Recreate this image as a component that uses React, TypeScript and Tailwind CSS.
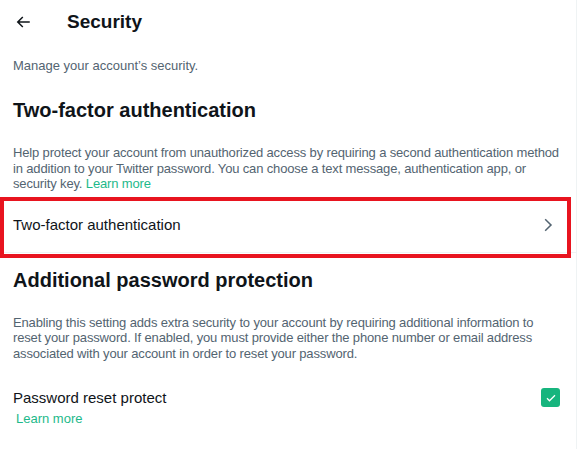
import React from "react";

export default function App() {
  const font = { fontFamily: '"Liberation Sans", Arial, sans-serif' };
  return (
    <div className="w-[581px] h-[449px] bg-white overflow-hidden" style={font}>
      <div className="relative w-[577px] h-[449px] border-r border-[#eff3f4]">
        {/* Header */}
        <div className="flex items-center h-[44px] pl-[14px]">
          <svg width="18" height="18" viewBox="0 0 24 24" className="text-[#0f1419]">
            <path d="M7.414 13l5.043 5.04-1.414 1.42L3.586 12l7.457-7.46 1.414 1.42L7.414 11H21v2H7.414z" fill="currentColor" />
          </svg>
          <div className="ml-[35px] text-[19px] font-bold text-[#0f1419] leading-[24px]">Security</div>
        </div>
        <div className="px-[13px] mt-[14px] text-[13px] leading-[16px] text-[#536471]">
          Manage your account’s security.
        </div>
        <div className="px-[13px] mt-[24px] text-[20px] font-bold leading-[24px] text-[#0f1419]">
          Two-factor authentication
        </div>
        <div className="pl-[13px] pr-[16px] mt-[23px] text-[13px] tracking-[-0.15px] leading-[15.6px] text-[#536471]">
          Help protect your account from unauthorized access by requiring a second authentication method in addition to your Twitter password. You can choose a text message, authentication app, or security key. <span className="text-[#1db98a]">Learn more</span>
        </div>
        <div className="mt-[6px] h-[55px] flex items-center justify-between px-[13px] border-b border-[#eff3f4]">
          <span className="text-[15px] text-[#0f1419]">Two-factor authentication</span>
          <svg width="18" height="18" viewBox="0 0 24 24" className="mr-[6px] text-[#536471]">
            <path d="M14.586 12L7.543 4.96l1.414-1.42L17.414 12l-8.457 8.46-1.414-1.42L14.586 12z" fill="currentColor" />
          </svg>
        </div>
        <div className="px-[13px] mt-[15px] text-[20px] font-bold leading-[24px] text-[#0f1419]">
          Additional password protection
        </div>
        <div className="pl-[13px] pr-[16px] mt-[23px] text-[13px] tracking-[-0.15px] leading-[15.6px] text-[#536471]">
          Enabling this setting adds extra security to your account by requiring additional information to reset your password. If enabled, you must provide either the phone number or email address associated with your account in order to reset your password.
        </div>
        <div className="mt-[26px] flex items-center justify-between px-[13px]">
          <span className="text-[15px] leading-[20px] text-[#0f1419]">Password reset protect</span>
          <div className="mr-[3px] w-[19px] h-[19px] rounded-[3px] bg-[#17b57e] flex items-center justify-center">
            <svg width="12" height="12" viewBox="0 0 24 24">
              <path d="M4 12.5l5 5L20 6.5" stroke="white" strokeWidth="2.5" fill="none" />
            </svg>
          </div>
        </div>
        <div className="px-[16px] mt-[3px] text-[13px] leading-[16px] text-[#1db98a]">Learn more</div>

        {/* annotation box */}
        <div className="absolute left-0 top-[197px] w-[571px] h-[61px] border-[4px] border-[#e8141f]" />
      </div>
    </div>
  );
}
